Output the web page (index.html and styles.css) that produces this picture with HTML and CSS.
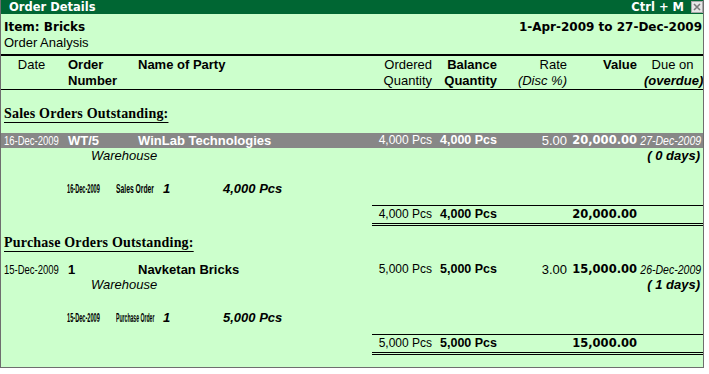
FILE: index.html
```html
<!DOCTYPE html>
<html lang="en">
<head>
<meta charset="utf-8">
<title>Order Details</title>
<link rel="stylesheet" href="styles.css">
</head>
<body>
<div class="window">
  <div class="titlebar">
    <span class="title">Order Details</span>
    <span class="title-right">
      <span class="shortcut">Ctrl + M</span>
      <span class="close"><svg width="10" height="10" viewBox="0 0 10 10"><path d="M2 2 L8 8 M8 2 L2 8" stroke="#7a7a7a" stroke-width="1.6" fill="none"/></svg></span>
    </span>
  </div>

  <div class="info">
    <div class="info-row"><span>Item: Bricks</span><span>1-Apr-2009 to 27-Dec-2009</span></div>
    <div class="report-name">Order Analysis</div>
  </div>

  <div class="grid head">
    <div class="h-date">Date</div>
    <div class="bold">Order<br>Number</div>
    <div class="bold">Name of Party</div>
    <div class="right">Ordered<br>Quantity</div>
    <div class="right bold">Balance<br>Quantity</div>
    <div class="right">Rate<br><i>(Disc %)</i></div>
    <div class="right bold">Value</div>
    <div class="h-due">Due on<br><b><i>(overdue)</i></b></div>
  </div>

  <h2 class="group-title"><span>Sales Orders Outstanding:</span></h2>
  <div class="grid row selected">
    <div><span class="nd">16-Dec-2009</span></div>
    <div class="bold">WT/5</div>
    <div class="bold">WinLab Technologies</div>
    <div class="right qty">4,000 Pcs</div>
    <div class="right bqty">4,000 Pcs</div>
    <div class="right">5.00</div>
    <div class="right val">20,000.00</div>
    <div class="due-cell"><span class="ndue">27-Dec-2009</span></div>
  </div>
  <div class="grid row2">
    <div class="godown"><i>Warehouse</i></div>
    <div class="right overdue">( 0 days)</div>
  </div>
  <div class="sub">
    <div class="sub-date"><span class="sq sq-date">16-Dec-2009</span></div>
    <div class="sub-type"><span class="sq sq-sales">Sales Order</span></div>
    <div class="sub-no">1</div>
    <div class="sub-qty">4,000 Pcs</div>
  </div>
  <div class="grid total">
    <div class="total-box">
      <div class="right qty">4,000 Pcs</div>
      <div class="right bqty">4,000 Pcs</div>
      <div></div>
      <div class="right val">20,000.00</div>
      <div></div>
    </div>
  </div>

  <h2 class="group-title"><span>Purchase Orders Outstanding:</span></h2>
  <div class="grid row">
    <div><span class="nd">15-Dec-2009</span></div>
    <div class="bold">1</div>
    <div class="bold">Navketan Bricks</div>
    <div class="right qty">5,000 Pcs</div>
    <div class="right bqty">5,000 Pcs</div>
    <div class="right">3.00</div>
    <div class="right val">15,000.00</div>
    <div class="due-cell"><span class="ndue">26-Dec-2009</span></div>
  </div>
  <div class="grid row2">
    <div class="godown"><i>Warehouse</i></div>
    <div class="right overdue">( 1 days)</div>
  </div>
  <div class="sub">
    <div class="sub-date"><span class="sq sq-date">15-Dec-2009</span></div>
    <div class="sub-type"><span class="sq sq-purchase">Purchase Order</span></div>
    <div class="sub-no">1</div>
    <div class="sub-qty">5,000 Pcs</div>
  </div>
  <div class="grid total">
    <div class="total-box">
      <div class="right qty">5,000 Pcs</div>
      <div class="right bqty">5,000 Pcs</div>
      <div></div>
      <div class="right val">15,000.00</div>
      <div></div>
    </div>
  </div>
</div>
</body>
</html>
```

FILE: styles.css
```css
* {
  box-sizing: border-box;
  margin: 0;
  padding: 0;
}

html,
body {
  background: #ffffff;
}

body {
  margin: 0;
  font-family: "Liberation Sans", Arial, sans-serif;
  font-size: 13px;
  color: #000000;
}

.window {
  width: 704px;
  height: 368px;
  background: #ccffcc;
  border: 1px solid #6e6e6e;
  border-top: none;
  overflow: hidden;
}

/* title bar */
.titlebar {
  height: 14px;
  background: #006633;
  color: #ffffff;
  display: flex;
  justify-content: space-between;
  align-items: flex-start;
  padding-left: 8px;
  font-family: "DejaVu Sans", Verdana, sans-serif;
  font-weight: bold;
  font-size: 11.5px;
  line-height: 14px;
}

.title-right {
  display: flex;
  align-items: flex-start;
}

.shortcut {
  margin-right: 7px;
}

.close {
  width: 12px;
  height: 12px;
  margin-top: 1px;
  background: #e6e6e6;
  border: 1px solid #a8a8a8;
  display: flex;
  align-items: center;
  justify-content: center;
}

/* report info */
.info {
  padding: 6px 1px 4px 3px;
  border-bottom: 2px solid #000000;
}

.info-row {
  display: flex;
  justify-content: space-between;
  font-family: "DejaVu Sans", Verdana, sans-serif;
  font-weight: bold;
  font-size: 12px;
  line-height: 15px;
}

.report-name {
  font-size: 13px;
  line-height: 15px;
}

/* columns */
.grid {
  display: grid;
  grid-template-columns: 64px 70px 234px 60px 65px 70px 70px 64px;
  padding: 0 2px 0 3px;
  white-space: nowrap;
}

.bold {
  font-weight: bold;
}

.right {
  text-align: right;
}

.head {
  line-height: 16px;
  padding-top: 1px;
  border-bottom: 1px solid #000000;
  margin-bottom: 15px;
}

.h-date {
  text-align: center;
  padding-right: 9px;
}

.h-due {
  text-align: center;
  padding-left: 7px;
}

/* group headings */
.group-title {
  font-family: "Liberation Serif", "Times New Roman", serif;
  font-weight: bold;
  font-size: 14px;
  line-height: 18px;
  letter-spacing: 0.2px;
  padding-left: 3px;
  margin-top: 8px;
}

.group-title span {
  text-decoration: underline;
  text-decoration-thickness: 1px;
  text-underline-offset: 4px;
}

/* entries */
.row {
  line-height: 15px;
  margin-top: 10px;
}

.row.selected {
  background: #878787;
  color: #ffffff;
}

.nd {
  display: inline-block;
  transform: scaleX(0.73);
  transform-origin: 0 50%;
}

.due-cell {
  display: flex;
  justify-content: flex-end;
}

.ndue {
  display: inline-block;
  flex: none;
  font-style: italic;
  transform: scaleX(0.81);
  transform-origin: 100% 50%;
}

.qty {
  font-size: 12px;
}

.bqty {
  font-weight: bold;
  font-size: 12.5px;
}

.val {
  font-family: "DejaVu Sans", Verdana, sans-serif;
  font-weight: bold;
  font-size: 11.5px;
}

.row2 {
  line-height: 15px;
}

.godown {
  grid-column: 1 / 8;
  padding-left: 87px;
}

.overdue {
  font-weight: bold;
  font-style: italic;
  padding-right: 1px;
}

/* order sub lines */
.sub {
  display: flex;
  line-height: 15px;
  margin-top: 18px;
  padding-left: 66px;
  white-space: nowrap;
}

.sub-date {
  width: 49px;
}

.sub-type {
  width: 47px;
}

.sub-no {
  width: 60px;
  font-weight: bold;
  font-style: italic;
}

.sub-qty {
  font-weight: bold;
  font-style: italic;
}

.sq {
  display: inline-block;
  font-weight: bold;
  font-size: 12.5px;
  transform-origin: 0 50%;
}

.sq-date {
  transform: scaleX(0.45);
}

.sq-sales {
  transform: scaleX(0.54);
}

.sq-purchase {
  transform: scaleX(0.41);
}

/* totals */
.total {
  margin-top: 8px;
}

.total-box {
  grid-column: 4 / -1;
  margin-right: -2px;
  display: grid;
  grid-template-columns: 60px 65px 70px 70px 66px;
  border-top: 1px solid #000000;
  border-bottom: 3px double #000000;
  line-height: 17px;
}
```
